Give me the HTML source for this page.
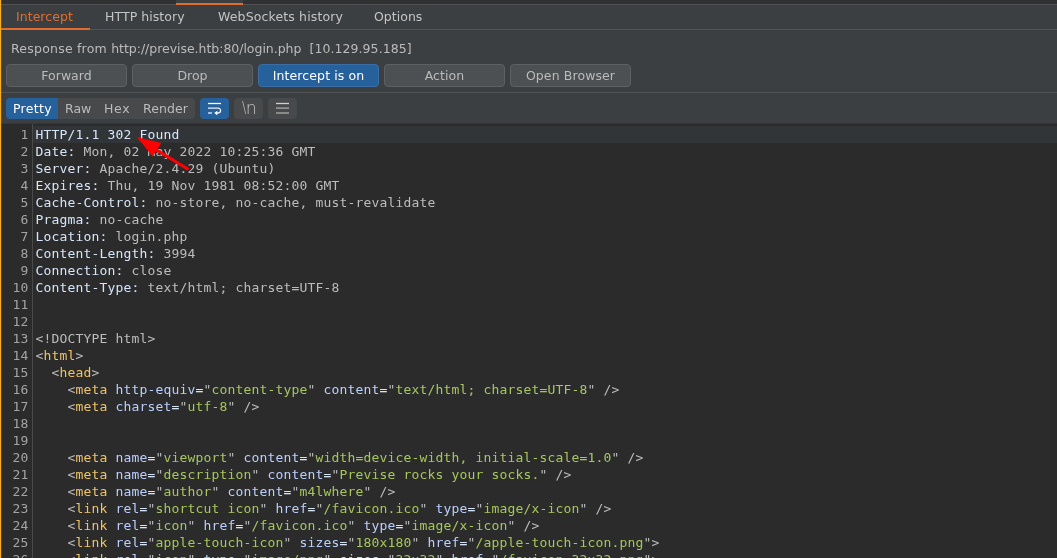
<!DOCTYPE html>
<html>
<head>
<meta charset="utf-8">
<title>Burp Suite - Proxy Intercept</title>
<style>
html,body{margin:0;padding:0;}
body{width:1057px;height:558px;overflow:hidden;background:#3c3f41;position:relative;font-family:"DejaVu Sans","Liberation Sans",sans-serif;font-size:12.5px;color:#bbbbbb;}
.abs{position:absolute;}
.tab,#resp,.btn,.segt,#lines,#code{will-change:transform;}
#topbar{left:0;top:0;width:1057px;height:4px;background:#2f3133;}
#topline{left:0;top:4px;width:1057px;height:1px;background:#515355;}
#toporange{left:176px;top:3px;width:67px;height:2px;background:#e16d2d;}
#toptab{left:176px;top:0;width:67px;height:3px;background:#3c3f41;}
#leftedge{left:0;top:0;width:1px;height:558px;background:#f7ad22;box-shadow:1px 0 0 rgba(247,173,34,0.18);}
#tabline{left:0;top:29px;width:1057px;height:1px;background:#515355;}
#tabsel{left:1px;top:28px;width:89px;height:2px;background:#e16d2d;}
.tab{top:9px;height:16px;line-height:16px;white-space:nowrap;color:#c4c4c4;}
.tab.sel{color:#e16d2d;}
#resp{left:11px;top:41px;height:16px;line-height:16px;white-space:pre;color:#bbbbbb;letter-spacing:0.07px;}
.btn{top:64px;width:119px;height:21px;border:1px solid #5e6163;border-radius:4px;background:#4c5052;text-align:center;line-height:21px;color:#bbbbbb;}
.btn.on{background:#26619c;border-color:#3a6ea5;color:#ffffff;}
#sepline{left:0;top:92px;width:1057px;height:1px;background:#515355;}
#seg{left:6px;top:98px;width:189px;height:21px;background:#47494b;border-radius:4px;}
#segsel{left:6px;top:98px;width:52px;height:21px;background:#26619c;border-radius:4px 0 0 4px;}
.segt{top:101px;height:16px;line-height:16px;white-space:nowrap;color:#bbbbbb;}
.ib{top:98px;width:29px;height:21px;border-radius:4px;background:#47494b;}
.ib.on{background:#26619c;}
#edtop{left:1px;top:123px;width:1056px;height:1px;background:#343638;}
#editor{left:1px;top:124px;width:1056px;height:434px;background:#2b2b2b;}
#curline{left:33px;top:126px;width:1024px;height:17px;background:#323537;}
#gutline{left:32px;top:124px;width:1px;height:434px;background:#4a4a4a;}
#lines,#code{font-family:"DejaVu Sans Mono","Liberation Mono",monospace;font-size:13px;line-height:17px;letter-spacing:0.1733px;white-space:pre;}
#lines{left:1px;top:126px;width:27.5px;text-align:right;color:#a4a4a4;}
#code{left:35px;padding-left:0.5px;top:126px;color:#bcbcbc;}
.h{color:#d6e5f8;}
.t{color:#efc465;}
.a{color:#bbcfff;}
.v{color:#a7c75d;}
</style>
</head>
<body>
<div class="abs" id="topbar"></div>
<div class="abs" id="topline"></div>
<div class="abs" id="toptab"></div>
<div class="abs" id="toporange"></div>
<div class="abs" id="tabline"></div>
<div class="abs" id="tabsel"></div>
<div class="abs tab sel" style="left:15.8px;letter-spacing:0.04px">Intercept</div>
<div class="abs tab" style="left:105.1px;letter-spacing:0.06px">HTTP history</div>
<div class="abs tab" style="left:217.5px;letter-spacing:0.14px">WebSockets history</div>
<div class="abs tab" style="left:374.4px;letter-spacing:0.02px">Options</div>
<div class="abs" id="resp"><span style="letter-spacing:0.22px">Response from </span><span style="letter-spacing:-0.03px">http://previse.htb:80/login.php</span>  [10.129.95.185]</div>
<div class="abs btn" style="left:6px">Forward</div>
<div class="abs btn" style="left:132px">Drop</div>
<div class="abs btn on" style="left:258px;letter-spacing:0.1px">Intercept is on</div>
<div class="abs btn" style="left:384px;letter-spacing:0.1px">Action</div>
<div class="abs btn" style="left:510px;letter-spacing:0.1px">Open Browser</div>
<div class="abs" id="sepline"></div>
<div class="abs" id="seg"></div>
<div class="abs" id="segsel"></div>
<div class="abs segt" style="left:13px;color:#fff;letter-spacing:0.3px">Pretty</div>
<div class="abs segt" style="left:65px">Raw</div>
<div class="abs segt" style="left:104px;letter-spacing:0.7px">Hex</div>
<div class="abs segt" style="left:143px;letter-spacing:0.1px">Render</div>
<div class="abs ib on" style="left:200px"></div>
<div class="abs ib" style="left:234px"></div>
<div class="abs ib" style="left:268px"></div>
<svg class="abs" style="left:196px;top:94px;will-change:transform" width="110" height="30" viewBox="196 94 110 30">
<g fill="none" stroke="#ffffff" stroke-width="1.3">
<path d="M208 103.5H221"/>
<path d="M208 108.2H218.2a2.4 2.4 0 0 1 0 4.8H216.8" stroke-opacity="0.9"/>
<path d="M208 113H212" stroke-opacity="0.9"/>
</g>
<polygon points="214.2,113 217.3,110.7 217.3,115.3" fill="#ffffff"/>
<g fill="none" stroke="#bdbdbd" stroke-width="1.3">
<path d="M276 103.5H289" stroke="#cfcfcf"/>
<path d="M276 108.1H289" stroke-opacity="0.85"/>
<path d="M276 113H289" stroke-opacity="0.85"/>
</g>
<text x="242" y="113.2" font-family="DejaVu Sans, Liberation Sans, sans-serif" font-weight="200" font-size="15.6" fill="#c0c0c0" textLength="4.3" lengthAdjust="spacingAndGlyphs">\</text>
<text x="245.7" y="113.6" font-family="DejaVu Sans, Liberation Sans, sans-serif" font-weight="200" font-size="17.5" fill="#c0c0c0">n</text>
</svg>
<div class="abs" id="edtop"></div>
<div class="abs" id="editor"></div>
<div class="abs" id="curline"></div>
<div class="abs" id="gutline"></div>
<div class="abs" id="lines">1
2
3
4
5
6
7
8
9
10
11
12
13
14
15
16
17
18
19
20
21
22
23
24
25
26</div>
<div class="abs" id="code"><span class="h">HTTP/1.1 302 Found</span>
<span class="h">Date:</span> Mon, 02 May 2022 10:25:36 GMT
<span class="h">Server:</span> Apache/2.4.29 (Ubuntu)
<span class="h">Expires:</span> Thu, 19 Nov 1981 08:52:00 GMT
<span class="h">Cache-Control:</span> no-store, no-cache, must-revalidate
<span class="h">Pragma:</span> no-cache
<span class="h">Location:</span> login.php
<span class="h">Content-Length:</span> 3994
<span class="h">Connection:</span> close
<span class="h">Content-Type:</span> text/html; charset=UTF-8


&lt;!DOCTYPE html&gt;
&lt;<span class="t">html</span>&gt;
  &lt;<span class="t">head</span>&gt;
    &lt;<span class="t">meta</span> <span class="a">http-equiv</span><span class="h">=</span>"<span class="v">content-type</span>" <span class="a">content</span><span class="h">=</span>"<span class="v">text/html; charset=UTF-8</span>" /&gt;
    &lt;<span class="t">meta</span> <span class="a">charset</span><span class="h">=</span>"<span class="v">utf-8</span>" /&gt;


    &lt;<span class="t">meta</span> <span class="a">name</span><span class="h">=</span>"<span class="v">viewport</span>" <span class="a">content</span><span class="h">=</span>"<span class="v">width=device-width, initial-scale=1.0</span>" /&gt;
    &lt;<span class="t">meta</span> <span class="a">name</span><span class="h">=</span>"<span class="v">description</span>" <span class="a">content</span><span class="h">=</span>"<span class="v">Previse rocks your socks.</span>" /&gt;
    &lt;<span class="t">meta</span> <span class="a">name</span><span class="h">=</span>"<span class="v">author</span>" <span class="a">content</span><span class="h">=</span>"<span class="v">m4lwhere</span>" /&gt;
    &lt;<span class="t">link</span> <span class="a">rel</span><span class="h">=</span>"<span class="v">shortcut icon</span>" <span class="a">href</span><span class="h">=</span>"<span class="v">/favicon.ico</span>" <span class="a">type</span><span class="h">=</span>"<span class="v">image/x-icon</span>" /&gt;
    &lt;<span class="t">link</span> <span class="a">rel</span><span class="h">=</span>"<span class="v">icon</span>" <span class="a">href</span><span class="h">=</span>"<span class="v">/favicon.ico</span>" <span class="a">type</span><span class="h">=</span>"<span class="v">image/x-icon</span>" /&gt;
    &lt;<span class="t">link</span> <span class="a">rel</span><span class="h">=</span>"<span class="v">apple-touch-icon</span>" <span class="a">sizes</span><span class="h">=</span>"<span class="v">180x180</span>" <span class="a">href</span><span class="h">=</span>"<span class="v">/apple-touch-icon.png</span>"&gt;
    &lt;<span class="t">link</span> <span class="a">rel</span><span class="h">=</span>"<span class="v">icon</span>" <span class="a">type</span><span class="h">=</span>"<span class="v">image/png</span>" <span class="a">sizes</span><span class="h">=</span>"<span class="v">32x32</span>" <span class="a">href</span><span class="h">=</span>"<span class="v">/favicon-32x32.png</span>"&gt;</div>
<svg class="abs" style="left:0;top:0" width="1057" height="558" viewBox="0 0 1057 558">
<line x1="188.5" y1="169.5" x2="155" y2="149" stroke="#ff0000" stroke-width="3.2"/>
<polygon points="137,137 161.4,143.1 152.5,156.6" fill="#ff0000"/>
</svg>
<div class="abs" id="leftedge"></div>
</body>
</html>
